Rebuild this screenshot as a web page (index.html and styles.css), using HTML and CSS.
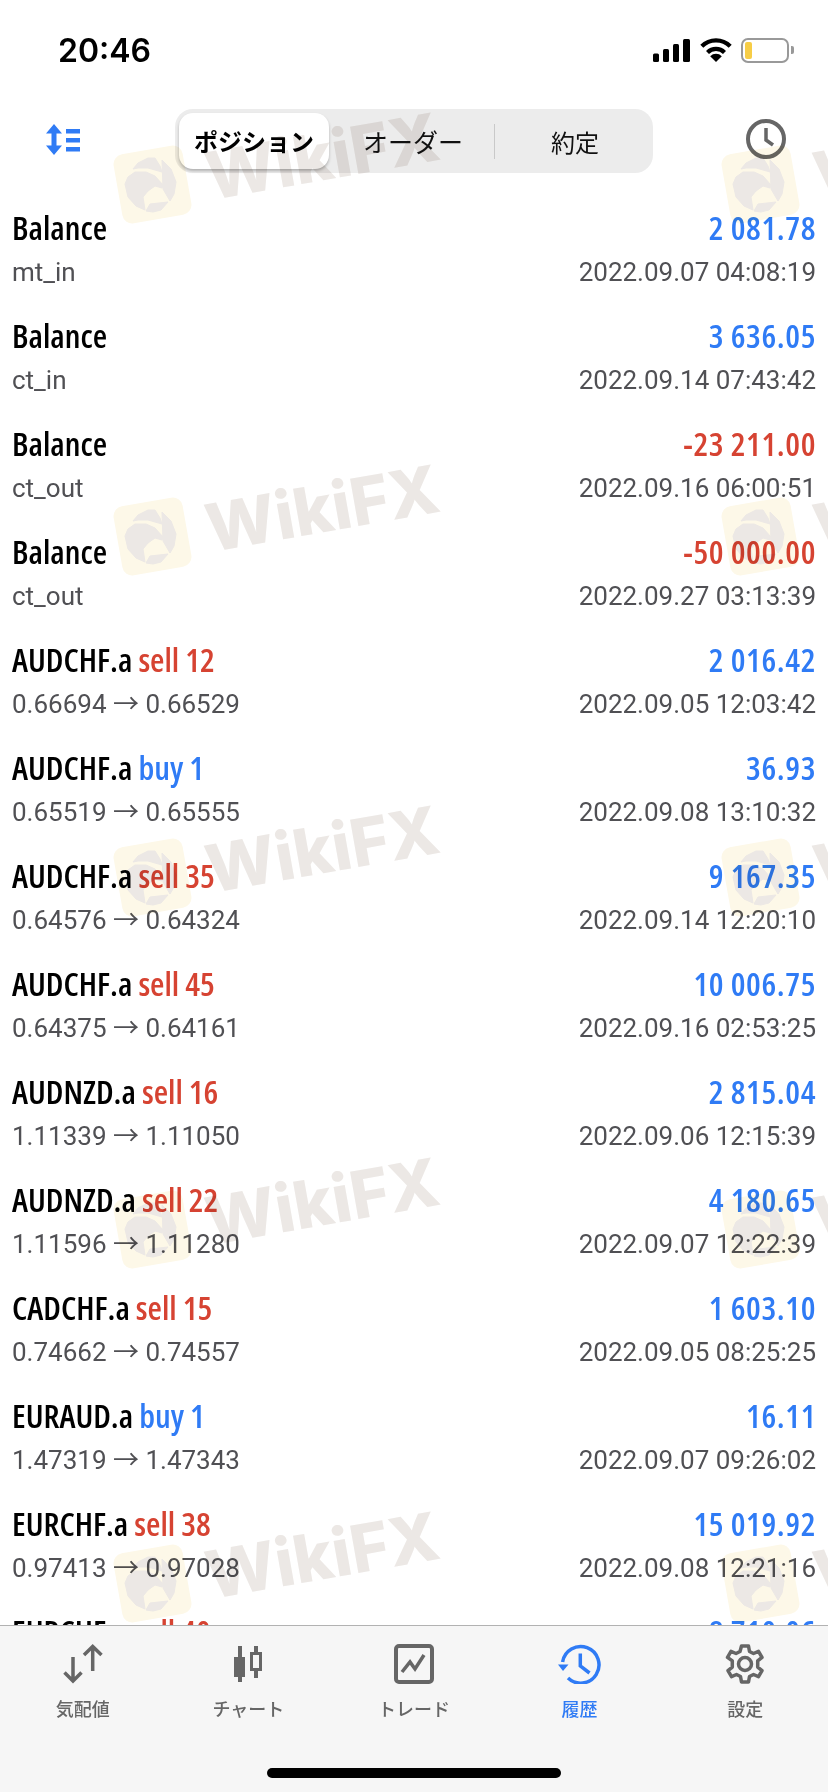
FILE: index.html

```html
<!DOCTYPE html>
<html lang="ja">
<head>
  <meta charset="UTF-8" />
  <meta name="viewport" content="width=device-width, initial-scale=1.0"/>
  <title>履歴</title>
  <link rel="stylesheet" href="styles.css">
</head>
<body>
  <div class="phone">
    <div class="status">
      <span class="time">20:46</span>
      <div class="status-icons">
        <svg class="signal" width="37" height="23" viewBox="0 0 37 23"><rect x="0" y="14.500" width="6" height="8.500" rx="1.500"/><rect x="10" y="10" width="6" height="13" rx="1.500"/><rect x="20" y="5" width="6" height="18" rx="1.500"/><rect x="30" y="0" width="7" height="23" rx="1.500"/></svg>
        <svg class="wifi" width="32" height="24" viewBox="0 0 32 24"><path d="M16 24l-5.800-5.800a8.200 8.200 0 0 1 11.600 0z"/><path d="M7.500 14.500a12 12 0 0 1 17 0" fill="none" stroke="#000" stroke-width="4.200"/><path d="M1.800 8.200a20 20 0 0 1 28.400 0" fill="none" stroke="#000" stroke-width="4.200"/></svg>
        <div class="battery"><span class="battery-fill"></span></div>
        <span class="battery-tip"></span>
      </div>
    </div>

    <div class="toolbar">
      <svg class="sort-icon" width="34" height="31" viewBox="0 0 34 31" fill="#2f7bf5"><path d="M8 0l8 9.500h-5.500v12H16l-8 9.500-8-9.500h5.500v-12H0z"/><rect x="20" y="5" width="14" height="4.500"/><rect x="20" y="14" width="14" height="4.500"/><rect x="20" y="23" width="14" height="4.500"/></svg>
      <div class="segment">
        <span class="seg-item seg-on">ポジション</span>
        <span class="seg-item seg-mid">オーダー</span>
        <span class="seg-line"></span>
        <span class="seg-item seg-end">約定</span>
      </div>
      <svg class="clock-icon" width="40" height="40" viewBox="0 0 40 40" fill="none" stroke="#666" stroke-width="4"><circle cx="20" cy="20" r="18"/><path d="M20 9v12l7 5" stroke-width="3.500"/></svg>
    </div>

    <div class="list">
      <div class="row"><div class="line"><span class="name">Balance</span><span class="amount blue">2 081.78</span></div><div class="line sub"><span>mt_in</span><span>2022.09.07 04:08:19</span></div></div>
      <div class="row"><div class="line"><span class="name">Balance</span><span class="amount blue">3 636.05</span></div><div class="line sub"><span>ct_in</span><span>2022.09.14 07:43:42</span></div></div>
      <div class="row"><div class="line"><span class="name">Balance</span><span class="amount red">-23 211.00</span></div><div class="line sub"><span>ct_out</span><span>2022.09.16 06:00:51</span></div></div>
      <div class="row"><div class="line"><span class="name">Balance</span><span class="amount red">-50 000.00</span></div><div class="line sub"><span>ct_out</span><span>2022.09.27 03:13:39</span></div></div>
      <div class="row"><div class="line"><span class="name">AUDCHF.a <i class="red">sell 12</i></span><span class="amount blue">2 016.42</span></div><div class="line sub"><span>0.66694 → 0.66529</span><span>2022.09.05 12:03:42</span></div></div>
      <div class="row"><div class="line"><span class="name">AUDCHF.a <i class="blue">buy 1</i></span><span class="amount blue">36.93</span></div><div class="line sub"><span>0.65519 → 0.65555</span><span>2022.09.08 13:10:32</span></div></div>
      <div class="row"><div class="line"><span class="name">AUDCHF.a <i class="red">sell 35</i></span><span class="amount blue">9 167.35</span></div><div class="line sub"><span>0.64576 → 0.64324</span><span>2022.09.14 12:20:10</span></div></div>
      <div class="row"><div class="line"><span class="name">AUDCHF.a <i class="red">sell 45</i></span><span class="amount blue">10 006.75</span></div><div class="line sub"><span>0.64375 → 0.64161</span><span>2022.09.16 02:53:25</span></div></div>
      <div class="row"><div class="line"><span class="name">AUDNZD.a <i class="red">sell 16</i></span><span class="amount blue">2 815.04</span></div><div class="line sub"><span>1.11339 → 1.11050</span><span>2022.09.06 12:15:39</span></div></div>
      <div class="row"><div class="line"><span class="name">AUDNZD.a <i class="red">sell 22</i></span><span class="amount blue">4 180.65</span></div><div class="line sub"><span>1.11596 → 1.11280</span><span>2022.09.07 12:22:39</span></div></div>
      <div class="row"><div class="line"><span class="name">CADCHF.a <i class="red">sell 15</i></span><span class="amount blue">1 603.10</span></div><div class="line sub"><span>0.74662 → 0.74557</span><span>2022.09.05 08:25:25</span></div></div>
      <div class="row"><div class="line"><span class="name">EURAUD.a <i class="blue">buy 1</i></span><span class="amount blue">16.11</span></div><div class="line sub"><span>1.47319 → 1.47343</span><span>2022.09.07 09:26:02</span></div></div>
      <div class="row"><div class="line"><span class="name">EURCHF.a <i class="red">sell 38</i></span><span class="amount blue">15 019.92</span></div><div class="line sub"><span>0.97413 → 0.97028</span><span>2022.09.08 12:21:16</span></div></div>
      <div class="row"><div class="line"><span class="name">EURCHF.a <i class="red">sell 40</i></span><span class="amount blue">8 710.06</span></div></div>
    </div>

    <svg width="0" height="0" class="defs">
      <symbol id="wm" viewBox="0 -80 608 352">
        <rect x="5.500" y="5.500" width="70" height="70" rx="10" fill="#fdf8e8" transform="rotate(-10 40.500 40.500)"/>
        <g fill="#ece8e5" stroke="#ece8e5" stroke-width="1" stroke-linejoin="round">
          <path d="M21 25l5-6 10-5h7l5 8 2 6-14-4H26z"/>
          <path d="M50 16l9 9 5 13-2 12-4 7-7-12z"/>
          <path d="M38 60l18-2-7 8-8 2-7-1z"/>
          <path d="M13 40l3-7 7-5h11l9 4 8 9-1 3-7-2-7 5-5 6 2 13-9-4-8-9z"/>
        </g>
        <text x="95" y="66" class="wm-text" transform="rotate(-10 40.500 40.500)">WikiFX</text>
      </symbol>
    </svg>
    <div class="watermarks">
      <svg class="wm"><use href="#wm"/></svg><svg class="wm"><use href="#wm"/></svg>
      <svg class="wm"><use href="#wm"/></svg><svg class="wm"><use href="#wm"/></svg>
      <svg class="wm"><use href="#wm"/></svg><svg class="wm"><use href="#wm"/></svg>
      <svg class="wm"><use href="#wm"/></svg><svg class="wm"><use href="#wm"/></svg>
      <svg class="wm"><use href="#wm"/></svg><svg class="wm"><use href="#wm"/></svg>
    </div>

    <div class="tabbar">
      <div class="tabs">
        <div class="tab">
          <svg width="40" height="40" viewBox="0 0 40 40" fill="none" stroke="#666" stroke-width="3.500"><path d="M10 13v24M1.500 28.500l8.500 8.500 8.500-8.500"/><path d="M29.700 2.500V27M21 11l8.700-8.500 8.800 8.500"/></svg>
          <span>気配値</span>
        </div>
        <div class="tab">
          <svg width="40" height="40" viewBox="0 0 40 40" fill="none" stroke="#666"><path d="M12 2v36" stroke-width="4"/><path d="M6 13h11v20H6z" fill="#666" stroke="none"/><path d="M28 2v32" stroke-width="4"/><path d="M23.500 9.500h9v16h-9z" fill="#f6f6f6" stroke-width="3"/></svg>
          <span>チャート</span>
        </div>
        <div class="tab">
          <svg width="40" height="40" viewBox="0 0 40 40" fill="none" stroke="#666" stroke-width="4"><rect x="2" y="2" width="36" height="36" rx="3"/><path d="M8 28l8-10 5 7 9-14" stroke-width="3.500"/></svg>
          <span>トレード</span>
        </div>
        <div class="tab tab-on">
          <svg width="44" height="40" viewBox="0 0 44 40" fill="none" stroke="#2f7bf5" stroke-width="3.500"><path d="M4.600 18A18.300 18.300 0 1 1 10 34"/><path d="M0 20.500h10.500L5 27z" fill="#2f7bf5" stroke="none"/><path d="M22.300 9.500V22l9.200 7"/></svg>
          <span>履歴</span>
        </div>
        <div class="tab">
          <svg width="40" height="40" viewBox="0 0 40 40" fill="none" stroke="#666" stroke-width="3.500"><circle cx="20" cy="20" r="6.500"/><path d="M16.500 2h7l1 5.500 4 2 5-2.200 3.500 6-4.300 3.600v6.200l4.300 3.600-3.500 6-5-2.200-4 2-1 5.500h-7l-1-5.500-4-2-5 2.200-3.500-6 4.300-3.600v-6.200L2.500 13.300l3.500-6 5 2.200 4-2z" stroke-linejoin="round"/></svg>
          <span>設定</span>
        </div>
      </div>
      <div class="home-bar"></div>
    </div>
  </div>
</body>
</html>
```

FILE: styles.css

```css
body {
  margin: 0;
  background: #fff;
  font-family: Roboto, "Noto Sans CJK JP", sans-serif;
}
.phone {
  position: relative;
  width: 828px;
  height: 1792px;
  overflow: hidden;
  display: flex;
  flex-direction: column;
}

/* status bar */
.status {
  height: 100px;
  padding: 0 34px 0 58px;
  display: flex;
  align-items: center;
  justify-content: space-between;
  flex-shrink: 0;
}
.time {
  font-family: Inter, sans-serif;
  font-size: 32px;
  font-weight: 600;
  color: #000;
}
.status-icons {
  display: flex;
  align-items: center;
}
.signal {
  margin-right: 10px;
}
.wifi {
  margin-right: 9px;
}
.battery {
  width: 48px;
  height: 25px;
  box-sizing: border-box;
  border: 2px solid #999;
  border-radius: 7px;
  padding: 2px;
}
.battery-fill {
  display: block;
  width: 7px;
  height: 100%;
  background: #f7cd46;
  border-radius: 2px;
}
.battery-tip {
  width: 3px;
  height: 8px;
  margin-left: 2px;
  background: #999;
  border-radius: 0 2px 2px 0;
}

/* toolbar */
.toolbar {
  height: 96px;
  padding: 9px 42px 0 46px;
  box-sizing: border-box;
  display: flex;
  align-items: flex-start;
  flex-shrink: 0;
}
.sort-icon {
  margin-top: 15px;
  flex-shrink: 0;
}
.clock-icon {
  margin-top: 10px;
  flex-shrink: 0;
}
.segment {
  width: 478px;
  height: 64px;
  margin: 0 93px 0 95px;
  background: #ececec;
  border-radius: 18px;
  display: flex;
  align-items: center;
  flex-shrink: 0;
  font-family: "Noto Sans CJK JP", sans-serif;
  font-size: 24px;
  color: #111;
}
.seg-item {
  text-align: center;
}
.seg-on {
  width: 150px;
  height: 56px;
  line-height: 56px;
  margin-left: 4px;
  background: #fff;
  border-radius: 14px;
  box-shadow: 0 2px 3px rgba(0, 0, 0, 0.25);
  font-weight: 700;
  color: #000;
}
.seg-mid {
  width: 165px;
  padding-left: 3px;
  box-sizing: border-box;
  font-size: 25px;
}
.seg-line {
  width: 1px;
  height: 35px;
  background: #c9c9c9;
}
.seg-end {
  flex: 1;
  padding-left: 2px;
}

/* history rows */
.list {
  flex: 1;
  overflow: hidden;
}
.row {
  height: 108px;
  padding: 0 12px;
  box-sizing: border-box;
}
.line {
  display: flex;
  justify-content: space-between;
  align-items: center;
}
.line:first-child {
  height: 62px;
}
.name,
.amount {
  font-family: "Open Sans", sans-serif;
  font-stretch: 75%;
  font-weight: 640;
  font-size: 33px;
  color: #000;
}
.amount {
  letter-spacing: 0.6px;
}
.name i {
  font-style: normal;
}
.amount.blue,
.blue {
  color: #2f7bf5;
}
.amount.red,
.red {
  color: #d64332;
}
.sub {
  height: 20px;
  margin-top: 4px;
  line-height: 20px;
  font-size: 26px;
  color: #505054;
}

/* watermark overlay */
.defs {
  display: none;
}
.watermarks {
  position: absolute;
  left: 112px;
  top: 64px;
  display: grid;
  grid-template-columns: 608px 608px;
  grid-template-rows: 352px 341px 352px 354px 352px;
  mix-blend-mode: multiply;
  pointer-events: none;
}
.wm {
  width: 608px;
  height: 352px;
}
.wm-text {
  font-family: Inter, sans-serif;
  font-weight: 800;
  font-size: 66px;
  fill: #ece8e5;
}

/* bottom tabs */
.tabbar {
  position: absolute;
  left: 0;
  right: 0;
  bottom: 0;
  height: 167px;
  box-sizing: border-box;
  background: #f6f6f6;
  border-top: 1px solid #b2b2b2;
}
.tabs {
  display: grid;
  grid-template-columns: repeat(5, 1fr);
  padding-top: 18px;
}
.tab {
  display: flex;
  flex-direction: column;
  align-items: center;
  font-family: "Noto Sans CJK JP", sans-serif;
  font-size: 18px;
  font-weight: 500;
  color: #666;
}
.tab span {
  margin-top: 11px;
}
.tab-on {
  color: #2f7bf5;
}
.home-bar {
  position: absolute;
  left: 267px;
  bottom: 14px;
  width: 294px;
  height: 10px;
  background: #000;
  border-radius: 5px;
}
```
